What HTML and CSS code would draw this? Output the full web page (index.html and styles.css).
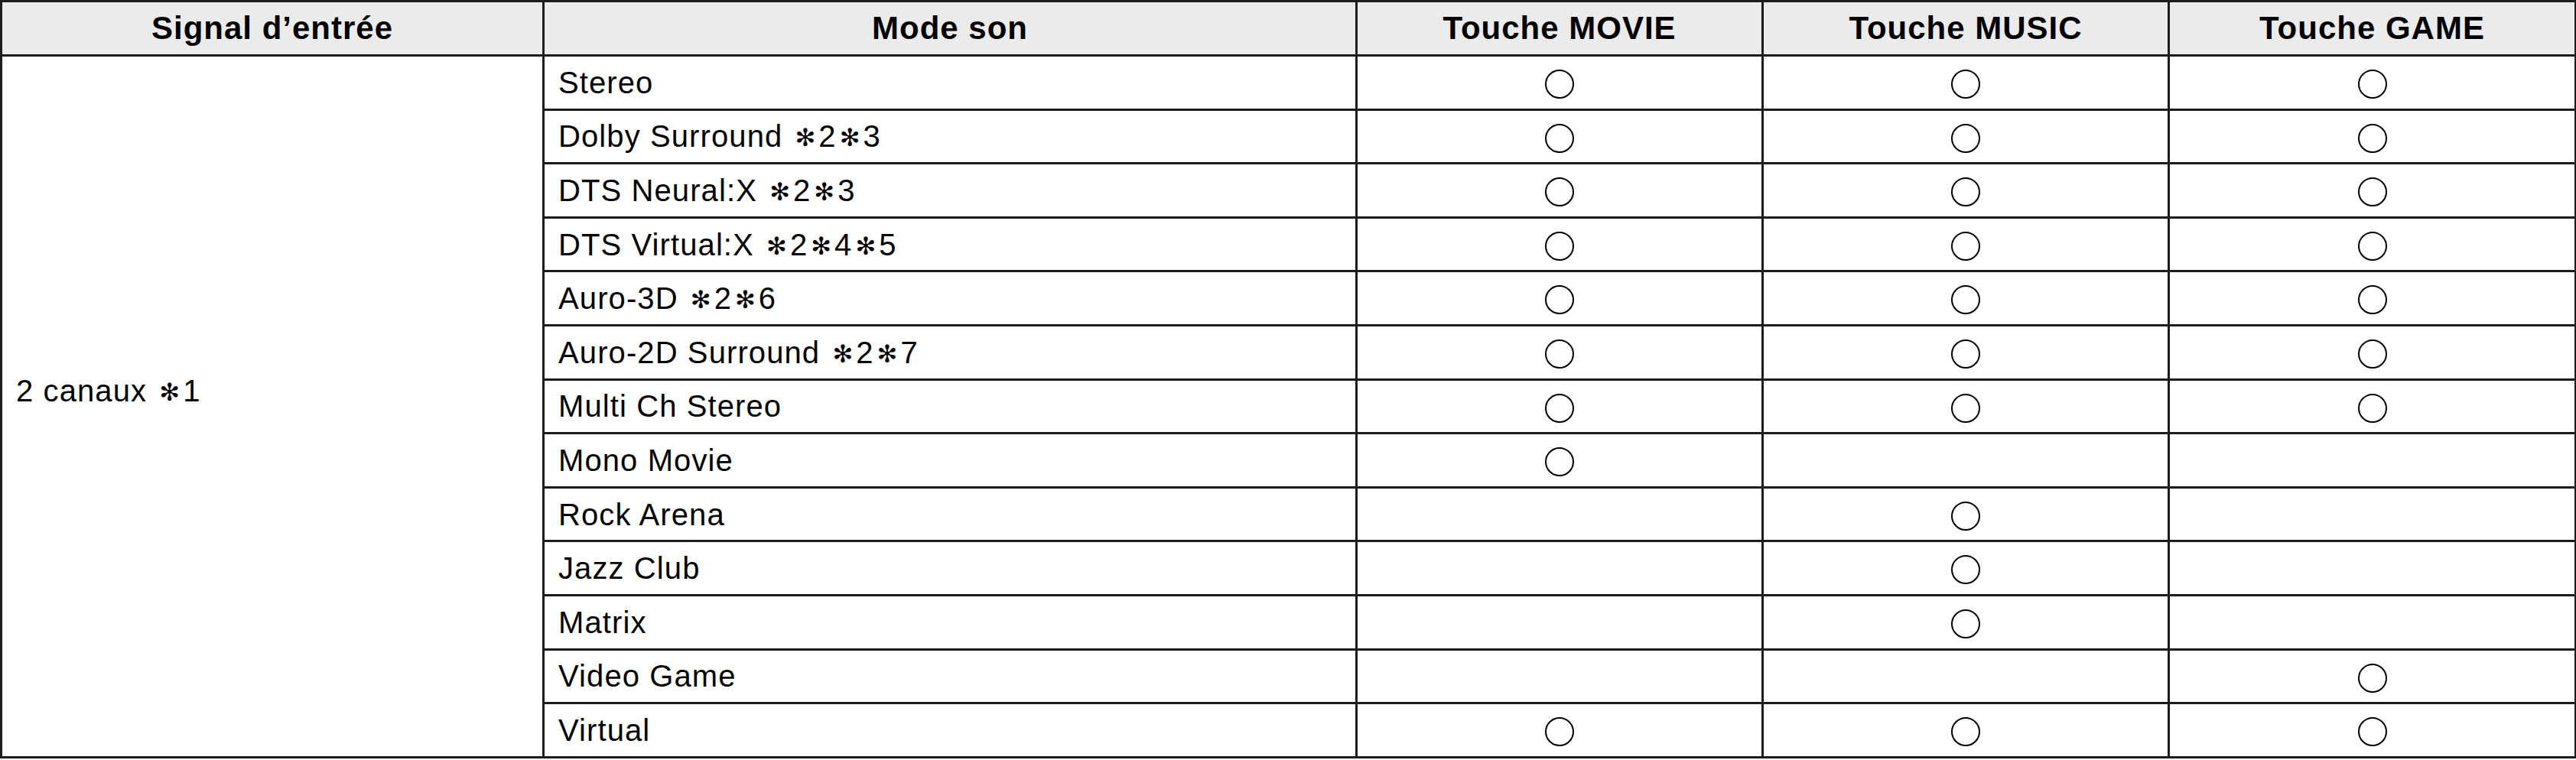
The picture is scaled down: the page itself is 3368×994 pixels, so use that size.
FILE: index.html
```html
<!DOCTYPE html>
<html lang="fr">
<head>
<meta charset="utf-8">
<title>Modes son</title>
<link rel="stylesheet" href="styles.css">
</head>
<body>
<table class="modes">
  <colgroup>
    <col class="c-signal">
    <col class="c-mode">
    <col class="c-key">
    <col class="c-key">
    <col class="c-key-last">
  </colgroup>
  <thead>
    <tr class="head-row">
      <th>Signal d’entrée</th>
      <th>Mode son</th>
      <th>Touche MOVIE</th>
      <th>Touche MUSIC</th>
      <th>Touche GAME</th>
    </tr>
  </thead>
  <tbody>
    <tr>
      <td class="signal" rowspan="13">2 canaux <span class="ast">✻</span>1</td>
      <td class="mode">Stereo</td>
      <td class="key"><span class="mark"></span></td>
      <td class="key"><span class="mark"></span></td>
      <td class="key"><span class="mark"></span></td>
    </tr>
    <tr>
      <td class="mode">Dolby Surround <span class="ast">✻</span>2<span class="ast">✻</span>3</td>
      <td class="key"><span class="mark"></span></td>
      <td class="key"><span class="mark"></span></td>
      <td class="key"><span class="mark"></span></td>
    </tr>
    <tr>
      <td class="mode">DTS Neural:X <span class="ast">✻</span>2<span class="ast">✻</span>3</td>
      <td class="key"><span class="mark"></span></td>
      <td class="key"><span class="mark"></span></td>
      <td class="key"><span class="mark"></span></td>
    </tr>
    <tr>
      <td class="mode">DTS Virtual:X <span class="ast">✻</span>2<span class="ast">✻</span>4<span class="ast">✻</span>5</td>
      <td class="key"><span class="mark"></span></td>
      <td class="key"><span class="mark"></span></td>
      <td class="key"><span class="mark"></span></td>
    </tr>
    <tr>
      <td class="mode">Auro-3D <span class="ast">✻</span>2<span class="ast">✻</span>6</td>
      <td class="key"><span class="mark"></span></td>
      <td class="key"><span class="mark"></span></td>
      <td class="key"><span class="mark"></span></td>
    </tr>
    <tr>
      <td class="mode">Auro-2D Surround <span class="ast">✻</span>2<span class="ast">✻</span>7</td>
      <td class="key"><span class="mark"></span></td>
      <td class="key"><span class="mark"></span></td>
      <td class="key"><span class="mark"></span></td>
    </tr>
    <tr>
      <td class="mode">Multi Ch Stereo</td>
      <td class="key"><span class="mark"></span></td>
      <td class="key"><span class="mark"></span></td>
      <td class="key"><span class="mark"></span></td>
    </tr>
    <tr>
      <td class="mode">Mono Movie</td>
      <td class="key"><span class="mark"></span></td>
      <td class="key"></td>
      <td class="key"></td>
    </tr>
    <tr>
      <td class="mode">Rock Arena</td>
      <td class="key"></td>
      <td class="key"><span class="mark"></span></td>
      <td class="key"></td>
    </tr>
    <tr>
      <td class="mode">Jazz Club</td>
      <td class="key"></td>
      <td class="key"><span class="mark"></span></td>
      <td class="key"></td>
    </tr>
    <tr>
      <td class="mode">Matrix</td>
      <td class="key"></td>
      <td class="key"><span class="mark"></span></td>
      <td class="key"></td>
    </tr>
    <tr>
      <td class="mode">Video Game</td>
      <td class="key"></td>
      <td class="key"></td>
      <td class="key"><span class="mark"></span></td>
    </tr>
    <tr>
      <td class="mode">Virtual</td>
      <td class="key"><span class="mark"></span></td>
      <td class="key"><span class="mark"></span></td>
      <td class="key"><span class="mark"></span></td>
    </tr>
  </tbody>
</table>
</body>
</html>
```

FILE: styles.css
```css
html, body {
  margin: 0;
  padding: 0;
  background: #ffffff;
}

body {
  font-family: "Liberation Sans", Arial, Helvetica, sans-serif;
  color: #000000;
}

.modes {
  width: 3368px;
  table-layout: fixed;
  border-collapse: collapse;
  border: 3px solid #000000;
}

.c-signal { width: 709px; }
.c-mode { width: 1063px; }
.c-key { width: 531px; }
.c-key-last { width: 532px; }

.modes th,
.modes td {
  border: 3px solid #1c1c1c;
  padding: 0;
}

.head-row {
  height: 71px;
  background: #ebebeb;
}

.head-row th {
  font-size: 42px;
  font-weight: bold;
  letter-spacing: 1px;
  text-align: center;
  vertical-align: middle;
  line-height: 1;
}

.modes tbody tr {
  height: 70.6px;
}

.modes td {
  font-size: 40px;
  letter-spacing: 1.1px;
  vertical-align: middle;
  line-height: 1;
}

.signal {
  padding: 0 0 40px 18px !important;
  text-align: left;
}

.mode {
  padding-left: 18px !important;
  text-align: left;
  white-space: nowrap;
}

.key {
  text-align: center;
}

.ast {
  font-family: "DejaVu Sans", sans-serif;
  font-size: 32px;
  letter-spacing: 0;
  display: inline-block;
  margin: 0 4px 0 4px;
  vertical-align: 1px;
}

.mark {
  display: inline-block;
  width: 38px;
  height: 38px;
  box-sizing: border-box;
  border: 2px solid #000000;
  border-radius: 50%;
  vertical-align: middle;
}
```
